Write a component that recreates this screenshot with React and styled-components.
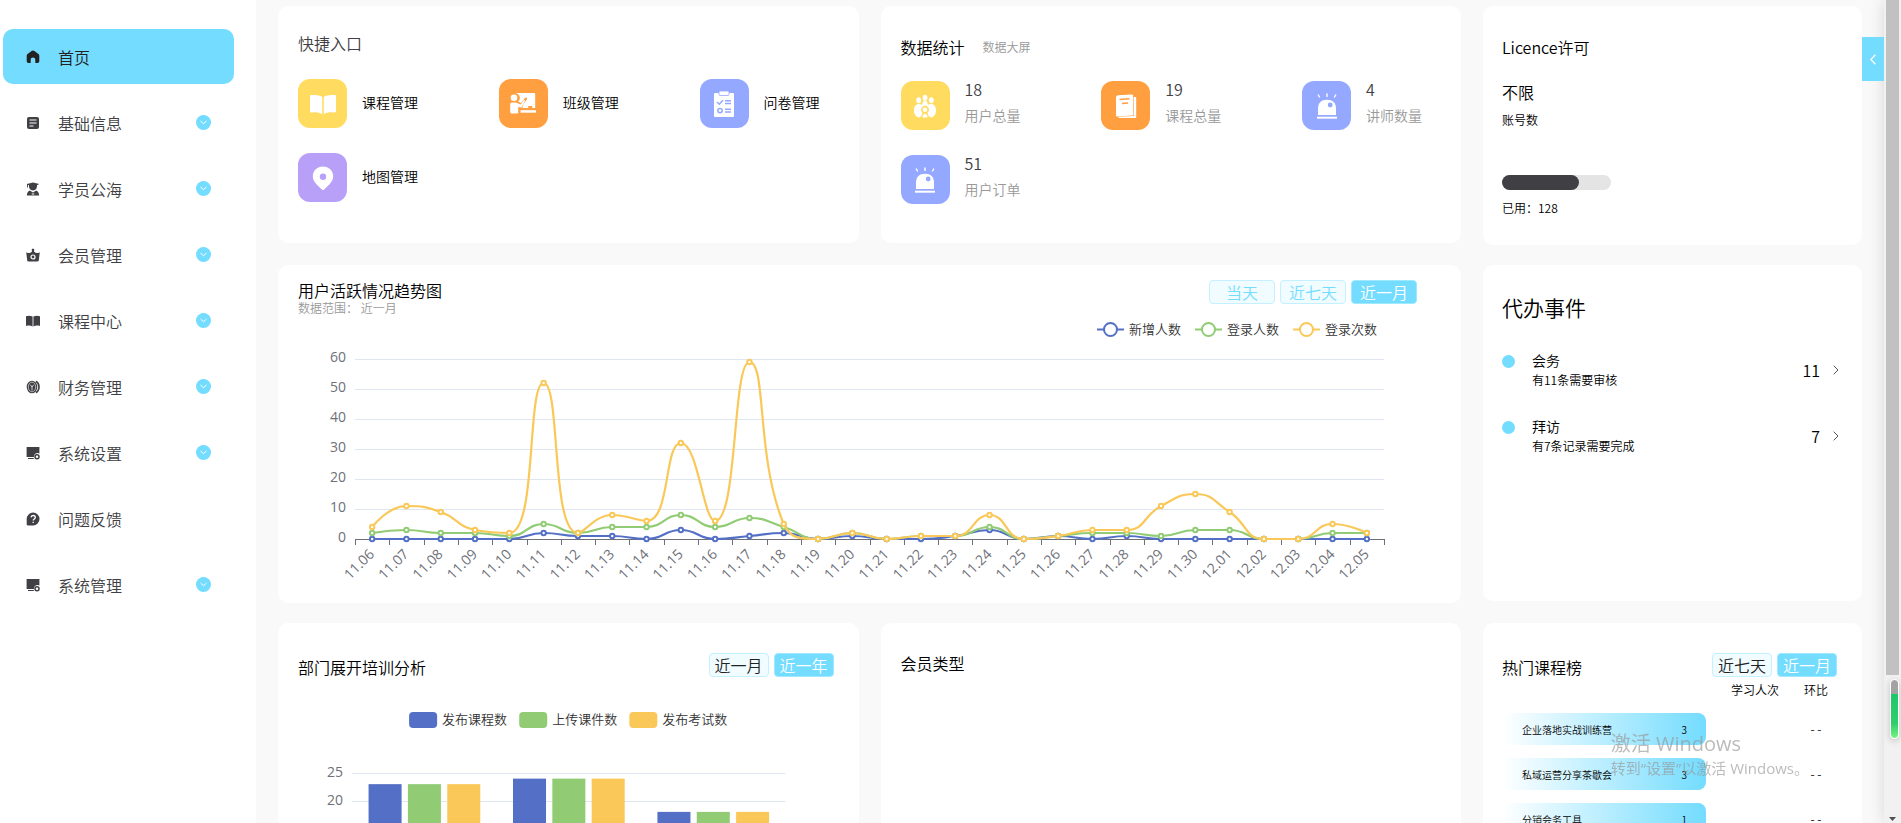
import styled, { createGlobalStyle } from "styled-components";

const BLUE = "#73dcff";
const SERIES = ["#5470c6", "#91cc75", "#fac858"];

const GlobalStyle = createGlobalStyle`
  * {
    box-sizing: border-box;
  }

  body {
    margin: 0;
    overflow: hidden;
    background: #f9f9f9;
    color: #000;
    font-family: "Noto Sans CJK SC", sans-serif;
    font-weight: 350;
    font-size: 16px;
    line-height: 20px;
  }

  h2, p, ul {
    margin: 0;
    padding: 0;
  }
`;

/* ---------- icons ---------- */

const HomeIcon = () => (
  <svg width="14" height="14" viewBox="0 0 14 14" fill="#222">
    <path d="M7 .6c.5 0 1 .2 1.400.5l4 3c.6.4.9 1 .9 1.700v5.300c0 1.200-.7 1.900-1.800 1.900H9.300V9.600C9.300 8.200 8.300 7.500 7 7.500S4.700 8.200 4.700 9.600V13H2.500C1.400 13 .7 12.300.7 11.100V5.800c0-.7.3-1.300.9-1.700l4-3C6 .8 6.500.6 7 .6z" />
  </svg>
);

const NoteIcon = () => (
  <svg width="14" height="14" viewBox="0 0 14 14">
    <rect x="1" y="1" width="12" height="12" rx="2" fill="#404044" />
    <path d="M3.500 4h7M3.500 7h7M3.500 10h4" stroke="#fff" strokeWidth="1.200" />
  </svg>
);

const StudentIcon = () => (
  <svg width="14" height="14" viewBox="0 0 14 14" fill="#404044">
    <path d="M.8 2 7 .4 13.200 2 11 3.300c.2 3-1.200 5.200-4 5.200S2.800 6.300 3 3.300L2 3v2.500h-.9V2.600z" />
    <path d="M3.800 8.400 7 10.500l3.200-2.100c1.800.6 2.800 2.500 3 5.200H.8c.2-2.700 1.200-4.600 3-5.200z" />
    <path d="M5.500 11.500h3l-.5 1h-2z" fill="#fff" />
  </svg>
);

const CrownIcon = () => (
  <svg width="14" height="14" viewBox="0 0 14 14">
    <path d="M.2 4.200c2.300 1.400 4 1.200 5.800-.6V2.700a1.300 1.300 0 1 1 2 0v.9c1.800 1.800 3.500 2 5.800.6l-1 8c-.1.800-.6 1.200-1.400 1.200H2.600c-.8 0-1.300-.4-1.400-1.200z" fill="#404044" />
    <circle cx="7" cy="9" r="2" fill="none" stroke="#fff" strokeWidth="1.200" />
  </svg>
);

const OpenBookIcon = () => (
  <svg width="14" height="14" viewBox="0 0 14 14" fill="#404044">
    <path d="M0 2.300c2.400-.9 4.600-.8 6.600.3v9.800c-2-1-4.200-1.100-6.600-.4zM14 2.300c-2.400-.9-4.600-.8-6.600.3v9.800c2-1 4.200-1.100 6.600-.4z" />
  </svg>
);

const CoinIcon = () => (
  <svg width="14" height="14" viewBox="0 0 14 14">
    <ellipse cx="6" cy="7" rx="5.300" ry="6.300" fill="#404044" />
    <ellipse cx="6" cy="7" rx="3.700" ry="4.800" fill="none" stroke="#fff" strokeWidth=".6" />
    <path d="M4.400 4.800 6 7l1.600-2.200M6 7v3.500" fill="none" stroke="#fff" strokeWidth=".8" />
    <path d="M10 1.300c4 2.400 4 9 0 11.400" fill="none" stroke="#404044" strokeWidth="1.600" />
  </svg>
);

const MonitorIcon = () => (
  <svg width="14" height="14" viewBox="0 0 14 14">
    <path d="M.6 1h12.800v6.600A3.600 3.600 0 0 0 7.900 11H.6z" fill="#404044" />
    <path d="M2 12.500h5.800" stroke="#404044" />
    <circle cx="11" cy="10.700" r="2" fill="none" stroke="#404044" strokeWidth="1.500" />
  </svg>
);

const QuestionIcon = () => (
  <svg width="14" height="14" viewBox="0 0 14 14">
    <path d="M7.100.6a6.400 6.400 0 1 1 0 12.800H1.800c-.8 0-1.100-.4-1.100-1.100V7A6.400 6.400 0 0 1 7.100.6z" fill="#404044" />
    <path d="M5 5.400c.2-2.600 4.300-2.500 4.300 0 0 1.500-2.100 1.600-2.100 3.100M7.200 9.700v1.200" fill="none" stroke="#fff" strokeWidth="1.300" />
  </svg>
);

const BookTile = () => (
  <svg width="28" height="28" viewBox="0 0 28 28" fill="#fff">
    <path d="M1 6.200C1 5.300 1.500 5 2.300 5c4-.2 8 0 10.900 1.800v17.400C10 22.200 6.500 22.200 2.800 22.500 1.500 22.600 1 22 1 21z" />
    <path d="M27 6.200c0-.9-.5-1.200-1.300-1.200-4-.2-8 0-10.900 1.800v17.400c3.200-2 6.700-2 10.400-1.700 1.300.1 1.800-.5 1.800-1.500z" />
  </svg>
);

const TeacherTile = () => (
  <svg width="28" height="28" viewBox="0 0 28 28" fill="#fff">
    <path d="M6 3h19c.7 0 1.200.5 1.200 1.200V18h-3v-2h-4v2h-6l1-3.500 3.700-5c.9-1.400-.9-2.700-1.900-1.400L12 13l-3-1.600c2-1.200 3-4.900 0-7.200A5 5 0 0 0 6 3z" />
    <circle cx="5" cy="7.800" r="3.300" />
    <path d="M1.200 14.500c0-1.300.8-2 2-2h3.600l4.800 2.100 3.300-4.800 1.300 1-3.800 6.700-3.200-.5V23.500H2.700c-1 0-1.500-.6-1.500-1.500z" />
    <path d="M11.500 20.200H27v2.500H11.500z" />
    <path d="M20 17h3v1.800h-3z" fill="#ff9f40" />
  </svg>
);

const ClipboardTile = () => (
  <svg width="28" height="28" viewBox="0 0 28 28">
    <rect x="4" y="3" width="20" height="24" rx="1" fill="#fff" />
    <rect x="9" y="1" width="10" height="4.500" rx="1" fill="#fff" stroke="#95a8ff" strokeWidth=".8" />
    <g fill="none" stroke="#95a8ff" strokeWidth="1.500">
      <path d="m7 12 2.300 2.200 3.700-4M15 10.800h6M15 13.500h6M15 19.200h6M15 22h6" />
      <circle cx="10" cy="20.600" r="2.200" />
    </g>
  </svg>
);

const PinTile = () => (
  <svg width="28" height="28" viewBox="0 0 28 28">
    <path d="M14 2.500c5.800 0 10.200 4.300 10.200 9.800C24.200 18.300 18 22.500 15.200 25.500c-.8.800-1.600.8-2.400 0C10 22.500 3.800 18.300 3.800 12.300c0-5.500 4.400-9.800 10.200-9.800zm0 7a3.200 3.200 0 1 0 0 6.400 3.200 3.200 0 0 0 0-6.400z" fill="#fff" fillRule="evenodd" />
  </svg>
);

const PeopleTile = () => (
  <svg width="28" height="28" viewBox="0 0 28 28" fill="#fff">
    <ellipse cx="14" cy="5.800" rx="2.400" ry="3" />
    <ellipse cx="7.700" cy="8.200" rx="2.400" ry="3" />
    <ellipse cx="20.300" cy="8.200" rx="2.400" ry="3" />
    <path d="M12.500 9h3l1.700 3.700c2.600-1.500 7.800-1 7.800 5.600 0 4.200-2 6.700-5 7.200L17.500 24c-.2-1.300-.5-2.200-1.200-2.900a4 4 0 1 0-4.600 0c-.7.700-1 1.600-1.200 2.900L8 25.500c-3-.5-5-3-5-7.200 0-6.600 5.200-7.100 7.800-5.600z" />
    <circle cx="14" cy="17.800" r="2.300" />
    <path d="M11.500 25.500c0-5 5-5 5 0z" />
  </svg>
);

const CourseTile = () => (
  <svg width="28" height="28" viewBox="0 0 28 28">
    <path d="M21.800 5h1.400c.7 0 1 .3 1 1v19c0 .7-.3 1-1 1H7.500l-2-1.300 16.300-.7z" fill="#fff" />
    <path d="M4 5.500C4 4 5 3.500 6.300 3.300L19.500 2.600c1.200 0 1.700.4 1.700 1.500V22c0 1-.5 1.500-1.500 1.600L5.500 24.500c-1 0-1.500-.4-1.500-1.300z" fill="#fff" />
    <path d="m7.500 7.500 10-.8M10 11.500l6-.4" stroke="#ff9f40" strokeWidth="1.500" />
  </svg>
);

const SirenTile = () => (
  <svg width="28" height="28" viewBox="0 0 28 28">
    <path d="M5 23v-6.500C5 11 8.500 7.800 14 7.800s9 3.200 9 8.700V23z" fill="#fff" />
    <path d="M4 25.700h20" stroke="#fff" strokeWidth="2" />
    <path d="M14 2v2.400M5.300 3 6.500 5M22.700 3 21.500 5" stroke="#fff" strokeWidth="1.400" strokeLinecap="round" />
    <circle cx="17.200" cy="13" r="2.400" fill="#95a8ff" />
  </svg>
);

/* ---------- data ---------- */

const menu = [
  { label: "首页", Icon: HomeIcon, active: true },
  { label: "基础信息", Icon: NoteIcon, expandable: true },
  { label: "学员公海", Icon: StudentIcon, expandable: true },
  { label: "会员管理", Icon: CrownIcon, expandable: true },
  { label: "课程中心", Icon: OpenBookIcon, expandable: true },
  { label: "财务管理", Icon: CoinIcon, expandable: true },
  { label: "系统设置", Icon: MonitorIcon, expandable: true },
  { label: "问题反馈", Icon: QuestionIcon },
  { label: "系统管理", Icon: MonitorIcon, expandable: true },
];

const shortcuts = [
  { label: "课程管理", color: "#ffdc60", Icon: BookTile },
  { label: "班级管理", color: "#ff9f40", Icon: TeacherTile },
  { label: "问卷管理", color: "#95a8ff", Icon: ClipboardTile },
  { label: "地图管理", color: "#b8a0f8", Icon: PinTile },
];

const stats = [
  { label: "用户总量", value: 18, color: "#ffdc60", Icon: PeopleTile },
  { label: "课程总量", value: 19, color: "#ff9f40", Icon: CourseTile },
  { label: "讲师数量", value: 4, color: "#95a8ff", Icon: SirenTile },
  { label: "用户订单", value: 51, color: "#95a8ff", Icon: SirenTile },
];

const todos = [
  { title: "会务", note: "有11条需要审核", count: 11 },
  { title: "拜访", note: "有7条记录需要完成", count: 7 },
];

const courses = [
  { name: "企业落地实战训练营", count: 3 },
  { name: "私域运营分享茶歇会", count: 3 },
  { name: "分销会务工具", count: 1 },
];

const days = [
  ...Array.from({ length: 25 }, (_, i) => `11.${String(i + 6).padStart(2, "0")}`),
  ...Array.from({ length: 5 }, (_, i) => `12.0${i + 1}`),
];

const trend = [
  {
    name: "新增人数",
    values: [0, 0, 0, 0, 0, 2, 1, 1, 0, 3, 0, 1, 2, 0, 1, 0, 0, 1, 3, 0, 1, 0, 1, 0, 0, 0, 0, 0, 0, 0],
  },
  {
    name: "登录人数",
    values: [2, 3, 2, 2, 1, 5, 2, 4, 4, 8, 4, 7, 4, 0, 2, 0, 1, 1, 4, 0, 1, 2, 2, 1, 3, 3, 0, 0, 2, 2],
  },
  {
    name: "登录次数",
    values: [4, 11, 9, 3, 2, 52, 2, 8, 6, 32, 6, 59, 5, 0, 2, 0, 1, 1, 8, 0, 1, 3, 3, 11, 15, 9, 0, 0, 5, 2],
  },
];

const training = {
  names: ["发布课程数", "上传课件数", "发布考试数"],
  groups: [23, 24, 18],
};

/* ---------- charts ---------- */

const clamp = (v, a, b) => Math.min(Math.max(v, Math.min(a, b)), Math.max(a, b));

// Bezier through all points; control points never leave the box of their segment
function smoothPath(pts) {
  let d = `M${pts[0][0]} ${pts[0][1]}`;
  let out = pts[0];
  for (let i = 1; i < pts.length; i++) {
    const prev = pts[i - 1];
    const cur = pts[i];
    const next = pts[i + 1];
    let cpIn = cur;
    let cpOut = cur;
    if (next) {
      const lenPrev = Math.hypot(cur[0] - prev[0], cur[1] - prev[1]);
      const lenNext = Math.hypot(next[0] - cur[0], next[1] - cur[1]);
      const ratio = lenNext / (lenNext + lenPrev);
      cpOut = cur.map((c, k) => clamp(c + (next[k] - prev[k]) * 0.5 * ratio, c, next[k]));
      cpIn = cur.map((c, k) => clamp(c - ((cpOut[k] - c) * lenPrev) / lenNext, c, prev[k]));
      cpOut = cur.map((c, k) => c + ((c - cpIn[k]) * lenNext) / lenPrev);
    }
    d += `C${out.join(" ")} ${cpIn.join(" ")} ${cur.join(" ")}`;
    out = cpOut;
  }
  return d;
}

const TrendChart = () => {
  const left = 57;
  const right = 1086;
  const base = 219;
  const step = (right - left) / days.length;
  const x = (i) => left + step * (i + 0.5);
  const y = (v) => base - v * 3;

  return (
    <Chart viewBox="0 0 1143 270">
      {trend.map((s, i) => (
        <g key={s.name} transform={`translate(${799 + i * 98} 9)`}>
          <path d="M0 .5h27" stroke={SERIES[i]} strokeWidth="2" />
          <circle cx="13.500" cy=".5" r="6.500" fill="#fff" stroke={SERIES[i]} strokeWidth="2" />
          <LegendText x="32" y="5">{s.name}</LegendText>
        </g>
      ))}
      {[0, 10, 20, 30, 40, 50, 60].map((v) => (
        <g key={v}>
          {v > 0 && <path d={`M${left} ${y(v) + 0.5}H${right}`} stroke="#e0e6f1" />}
          <AxisText x={left - 9} y={y(v) + 3} textAnchor="end">{v}</AxisText>
        </g>
      ))}
      <path d={`M${left} ${base + 0.5}H${right}`} stroke="#6e7079" />
      {[...days, ""].map((_, i) => (
        <path key={i} d={`M${Math.round(left + step * i) + 0.5} ${base}v6`} stroke="#6e7079" />
      ))}
      {days.map((day, i) => (
        <AxisText key={day} textAnchor="end" transform={`translate(${x(i) + 3} ${base + 16}) rotate(-45)`}>
          {day}
        </AxisText>
      ))}
      {trend.map((s, i) => (
        <g key={s.name} stroke={SERIES[i]}>
          <path d={smoothPath(s.values.map((v, k) => [x(k), y(v)]))} fill="none" strokeWidth="2.200" />
          {s.values.map((v, k) => (
            <circle key={k} cx={x(k)} cy={y(v)} r="2.200" fill="#fff" strokeWidth="2" />
          ))}
        </g>
      ))}
    </Chart>
  );
};

const TrainingChart = () => {
  const y = (v) => 73 + (25 - v) * 5.54;

  return (
    <Chart viewBox="0 0 540 240">
      {training.names.map((name, i) => (
        <g key={name} transform={`translate(${111 + i * 110} 12)`}>
          <rect width="28" height="16" rx="4" fill={SERIES[i]} />
          <LegendText x="33" y="12">{name}</LegendText>
        </g>
      ))}
      {[0, 5, 10, 15, 20, 25].map((v) => (
        <g key={v}>
          <path d={`M54 ${Math.round(y(v)) + 0.5}H487`} stroke={v ? "#e0e6f1" : "#6e7079"} />
          <AxisText x="45" y={y(v) + 4} textAnchor="end">{v}</AxisText>
        </g>
      ))}
      {training.groups.map((v, g) =>
        SERIES.map((color, i) => (
          <rect key={color + g} x={70.5 + g * 144.3 + i * 39.3} y={y(v)} width="33" height={y(0) - y(v)} fill={color} />
        ))
      )}
    </Chart>
  );
};

/* ---------- page ---------- */

const App = () => (
  <Page>
    <GlobalStyle />
    <Sidebar>
      {menu.map(({ label, Icon, active, expandable }) => (
        <MenuItem key={label} href="#" $active={active}>
          <Icon />
          {label}
          {expandable && (
            <Expand>
              <svg width="7" height="5" viewBox="0 0 7 5" fill="none" stroke="#fff">
                <path d="m.5 1 3 2.700L6.500 1" />
              </svg>
            </Expand>
          )}
        </MenuItem>
      ))}
    </Sidebar>

    <Board>
      <TopCard>
        <Title $soft>快捷入口</Title>
        <TileGrid>
          {shortcuts.map(({ label, color, Icon }) => (
            <Shortcut key={label} href="#">
              <Tile $color={color}><Icon /></Tile>
              <ShortcutName>{label}</ShortcutName>
            </Shortcut>
          ))}
        </TileGrid>
      </TopCard>

      <TopCard $low>
        <TitleRow>
          <Title>数据统计</Title>
          <MutedLink href="#">数据大屏</MutedLink>
        </TitleRow>
        <TileGrid>
          {stats.map(({ label, value, color, Icon }) => (
            <Stat key={label}>
              <Tile $color={color}><Icon /></Tile>
              <div>
                <StatValue>{value}</StatValue>
                <StatLabel>{label}</StatLabel>
              </div>
            </Stat>
          ))}
        </TileGrid>
      </TopCard>

      <LicenceCard>
        <Title>Licence许可</Title>
        <Quota>不限</Quota>
        <Small>账号数</Small>
        <Progress><div /></Progress>
        <Small>已用：128</Small>
      </LicenceCard>

      <TrendCard>
        <TrendHeader>
          <div>
            <Title>用户活跃情况趋势图</Title>
            <Muted>数据范围： 近一月</Muted>
          </div>
          <Buttons>
            <RangeButton $wide>当天</RangeButton>
            <RangeButton $wide>近七天</RangeButton>
            <RangeButton $wide $active>近一月</RangeButton>
          </Buttons>
        </TrendHeader>
        <TrendChart />
      </TrendCard>

      <TodoCard>
        <TodoTitle>代办事件</TodoTitle>
        <ul>
          {todos.map((todo) => (
            <Todo key={todo.title}>
              <Dot />
              <TodoText>
                <TodoName>{todo.title}</TodoName>
                <Small>{todo.note}</Small>
              </TodoText>
              <TodoLink href="#">
                {todo.count}
                <svg width="6" height="10" viewBox="0 0 6 10" fill="none" stroke="#555">
                  <path d="m.7.700 4.300 4.300L.7 9.300" />
                </svg>
              </TodoLink>
            </Todo>
          ))}
        </ul>
      </TodoCard>

      <BottomCard>
        <BottomHeader>
          <Title>部门展开培训分析</Title>
          <Buttons>
            <RangeButton $dark>近一月</RangeButton>
            <RangeButton $active>近一年</RangeButton>
          </Buttons>
        </BottomHeader>
        <TrainingChart />
      </BottomCard>

      <BottomCard>
        <Title>会员类型</Title>
      </BottomCard>

      <BottomCard $narrow>
        <BottomHeader $tight>
          <Title>热门课程榜</Title>
          <Buttons>
            <RangeButton $dark>近七天</RangeButton>
            <RangeButton $active>近一月</RangeButton>
          </Buttons>
        </BottomHeader>
        <Ranking>
          <thead>
            <tr>
              <th aria-label="课程" />
              <th>学习人次</th>
              <th>环比</th>
            </tr>
          </thead>
          <tbody>
            {courses.map((course) => (
              <tr key={course.name}>
                <td>
                  <CourseBar>
                    <span>{course.name}</span>
                    <span>{course.count}</span>
                  </CourseBar>
                </td>
                <td />
                <td>- -</td>
              </tr>
            ))}
          </tbody>
        </Ranking>
      </BottomCard>
    </Board>

    <ScrollTrack>
      <ScrollThumb />
      <ScrollArrow width="7" height="4" viewBox="0 0 7 4">
        <path d="M0 0h7L3.500 4z" fill="#505050" />
      </ScrollArrow>
    </ScrollTrack>
    <Drawer aria-label="展开">
      <svg width="6" height="11" viewBox="0 0 6 11" fill="none" stroke="#fff" strokeWidth="1.300">
        <path d="M5.300.7.900 5.500l4.400 4.800" />
      </svg>
    </Drawer>
    <Meter />
    <Activation>
      <ActivationTitle>激活 Windows</ActivationTitle>
      <p>转到“设置”以激活 Windows。</p>
    </Activation>
  </Page>
);

const Page = styled.div`
  display: flex;
  height: 100vh;
  overflow: hidden;
`;

const Sidebar = styled.nav`
  flex: 0 0 256px;
  display: flex;
  flex-direction: column;
  gap: 11px;
  padding: 29px 22px 0 3px;
  background: #fff;
`;

const MenuItem = styled.a`
  display: flex;
  align-items: center;
  height: 55px;
  flex-shrink: 0;
  padding: 0 23px;
  border-radius: 10px;
  background: ${(p) => (p.$active ? BLUE : "transparent")};
  color: ${(p) => (p.$active ? "#222" : "#404044")};
  text-decoration: none;

  > svg {
    margin-right: 18px;
  }
`;

const Expand = styled.span`
  display: flex;
  align-items: center;
  justify-content: center;
  width: 15px;
  height: 15px;
  margin-left: auto;
  border-radius: 50%;
  background: ${BLUE};
`;

const Board = styled.main`
  flex: 1;
  min-width: 0;
  display: grid;
  grid-template-columns: 1fr 1fr 379px;
  grid-auto-rows: max-content;
  align-items: start;
  gap: 20px 22px;
  padding: 6px 22px 0 22px;
`;

const Card = styled.section`
  min-width: 0;
  border-radius: 10px;
  background: #fff;
`;

const TopCard = styled(Card)`
  display: flex;
  flex-direction: column;
  gap: ${(p) => (p.$low ? 24 : 26)}px;
  min-height: 237px;
  padding: ${(p) => (p.$low ? 31 : 27)}px 39px 0 20px;
`;

const LicenceCard = styled(Card)`
  min-height: 239px;
  padding: 31px 19px 0;
`;

const TrendCard = styled(Card)`
  grid-column: span 2;
  min-height: 338px;
  padding: 15px 20px 0;
`;

const TodoCard = styled(Card)`
  min-height: 336px;
  padding: 28px 23px 0 19px;
`;

const BottomCard = styled(Card)`
  min-height: 338px;
  padding: 30px ${(p) => (p.$narrow ? "25px 0 19px" : "20px 0 20px")};
`;

const Title = styled.h2`
  font-size: 16px;
  line-height: 20px;
  font-weight: inherit;
  color: ${(p) => (p.$soft ? "#404044" : "#000")};
`;

const TitleRow = styled.div`
  display: flex;
  align-items: center;
  gap: 18px;
`;

const MutedLink = styled.a`
  color: #999;
  font-size: 12px;
  text-decoration: none;
`;

const Muted = styled.p`
  color: #999;
  font-size: 12px;
  line-height: 16px;
`;

const Small = styled.p`
  font-size: 12px;
  line-height: 20px;
`;

const TileGrid = styled.div`
  display: grid;
  grid-template-columns: repeat(3, max-content);
  justify-content: space-between;
  row-gap: 25px;
`;

const Tile = styled.span`
  display: flex;
  align-items: center;
  justify-content: center;
  width: 49px;
  height: 49px;
  border-radius: 12px;
  background: ${(p) => p.$color};
`;

const Shortcut = styled.a`
  display: flex;
  align-items: center;
  gap: 15px;
  color: #000;
  text-decoration: none;
`;

const ShortcutName = styled.span`
  padding-bottom: 3px;
  font-size: 14px;
`;

const Stat = styled.div`
  display: flex;
  gap: 15px;
  line-height: 16px;
`;

const StatValue = styled.div`
  margin-bottom: 10px;
  color: #404044;
`;

const StatLabel = styled.div`
  color: #999;
  font-size: 14px;
`;

const Quota = styled.p`
  margin: 25px 0 8px;
`;

const Progress = styled.div`
  width: 109px;
  height: 15px;
  margin: 45px 0 8px;
  border-radius: 8px;
  background: #e4e4e4;

  > div {
    width: 71%;
    height: 100%;
    border-radius: 8px;
    background: #404044;
  }
`;

const TrendHeader = styled.div`
  display: flex;
  justify-content: space-between;
  align-items: flex-start;
  height: 40px;
  padding-right: 24px;
`;

const Buttons = styled.div`
  display: flex;
  gap: 5px;
`;

const RangeButton = styled.button`
  width: ${(p) => (p.$wide ? 66 : 60)}px;
  height: 24px;
  padding: 0;
  border: 1px solid ${(p) => (p.$active ? "#a0e8ff" : "#c4f0ff")};
  border-radius: 4px;
  background: ${(p) => (p.$active ? BLUE : "#f0fcff")};
  color: ${(p) => (p.$active ? "#fff" : p.$dark ? "#222" : BLUE)};
  font: inherit;
  font-size: 16px;
  line-height: 20px;
`;

const Chart = styled.svg`
  display: block;
  width: 100%;
  height: auto;
`;

const LegendText = styled.text`
  fill: #333;
  font-size: 13px;
`;

const AxisText = styled.text`
  fill: #6e7079;
  font-family: "Open Sans", sans-serif;
  font-size: 14px;
  font-weight: 400;
`;

const TodoTitle = styled.h2`
  margin-bottom: 23px;
  font-size: 21px;
  line-height: 28px;
  font-weight: inherit;
`;

const Todo = styled.li`
  display: flex;
  align-items: flex-start;
  height: 66px;
  padding-top: 6px;
`;

const Dot = styled.span`
  width: 13px;
  height: 13px;
  margin-top: 5px;
  border-radius: 50%;
  background: ${BLUE};
`;

const TodoText = styled.div`
  margin-left: 17px;
`;

const TodoName = styled.p`
  font-size: 14px;
`;

const TodoLink = styled.a`
  display: flex;
  align-items: center;
  gap: 13px;
  margin: 10px 0 0 auto;
  color: #000;
  text-decoration: none;
`;

const BottomHeader = styled.div`
  display: flex;
  justify-content: space-between;
  align-items: flex-end;
  height: 24px;
  margin-bottom: ${(p) => (p.$tight ? 3 : 23)}px;
  padding-right: ${(p) => (p.$tight ? 0 : 5)}px;
`;

const Ranking = styled.table`
  width: calc(100% - 9px);
  table-layout: fixed;
  border-collapse: collapse;
  font-size: 12px;

  th {
    height: 33px;
    padding: 0;
    font-weight: inherit;
    vertical-align: top;
    text-align: center;
  }

  th:nth-child(1) {
    width: 204px;
  }

  th:nth-child(2) {
    width: 98px;
  }

  td {
    height: 45px;
    padding: 0;
    vertical-align: top;
    text-align: center;
    line-height: 32px;
  }
`;

const CourseBar = styled.div`
  display: flex;
  justify-content: space-between;
  height: 32px;
  padding: 1px 19px 0 20px;
  border-radius: 8px;
  background: linear-gradient(90deg, #fff, ${BLUE});
  font-size: 10px;
`;

const ScrollTrack = styled.div`
  position: relative;
  flex: 0 0 17px;
  padding: 0 2px;
  background: #f1f1f1;
  box-shadow: 0 0 16px rgba(0, 0, 0, 0.14);
`;

const ScrollThumb = styled.div`
  height: 82%;
  background: #c1c1c1;
`;

const ScrollArrow = styled.svg`
  position: absolute;
  left: 5px;
  bottom: 2px;
`;

const Drawer = styled.button`
  position: fixed;
  top: 37px;
  right: 17px;
  display: flex;
  align-items: center;
  justify-content: center;
  width: 22px;
  height: 44px;
  padding: 0;
  border: 0;
  background: ${BLUE};
`;

const Meter = styled.div`
  position: fixed;
  right: 2px;
  bottom: 84px;
  width: 9px;
  height: 60px;
  border: 1px solid #fff;
  border-radius: 5px;
  background: linear-gradient(#a3a3a3 24%, #1ec76a 24%, #2fce6c 75%, #74f27e);
  box-shadow: 0 2px 6px rgba(0, 0, 0, 0.2);
`;

const Activation = styled.div`
  position: fixed;
  right: 92px;
  bottom: 44px;
  color: rgba(150, 150, 150, 0.65);
  font-family: "Open Sans", "Noto Sans CJK SC", sans-serif;
  font-size: 15px;
  font-weight: 400;
  line-height: 22px;
  pointer-events: none;
`;

const ActivationTitle = styled.p`
  font-size: 20px;
  line-height: 26px;
`;

export default App;
